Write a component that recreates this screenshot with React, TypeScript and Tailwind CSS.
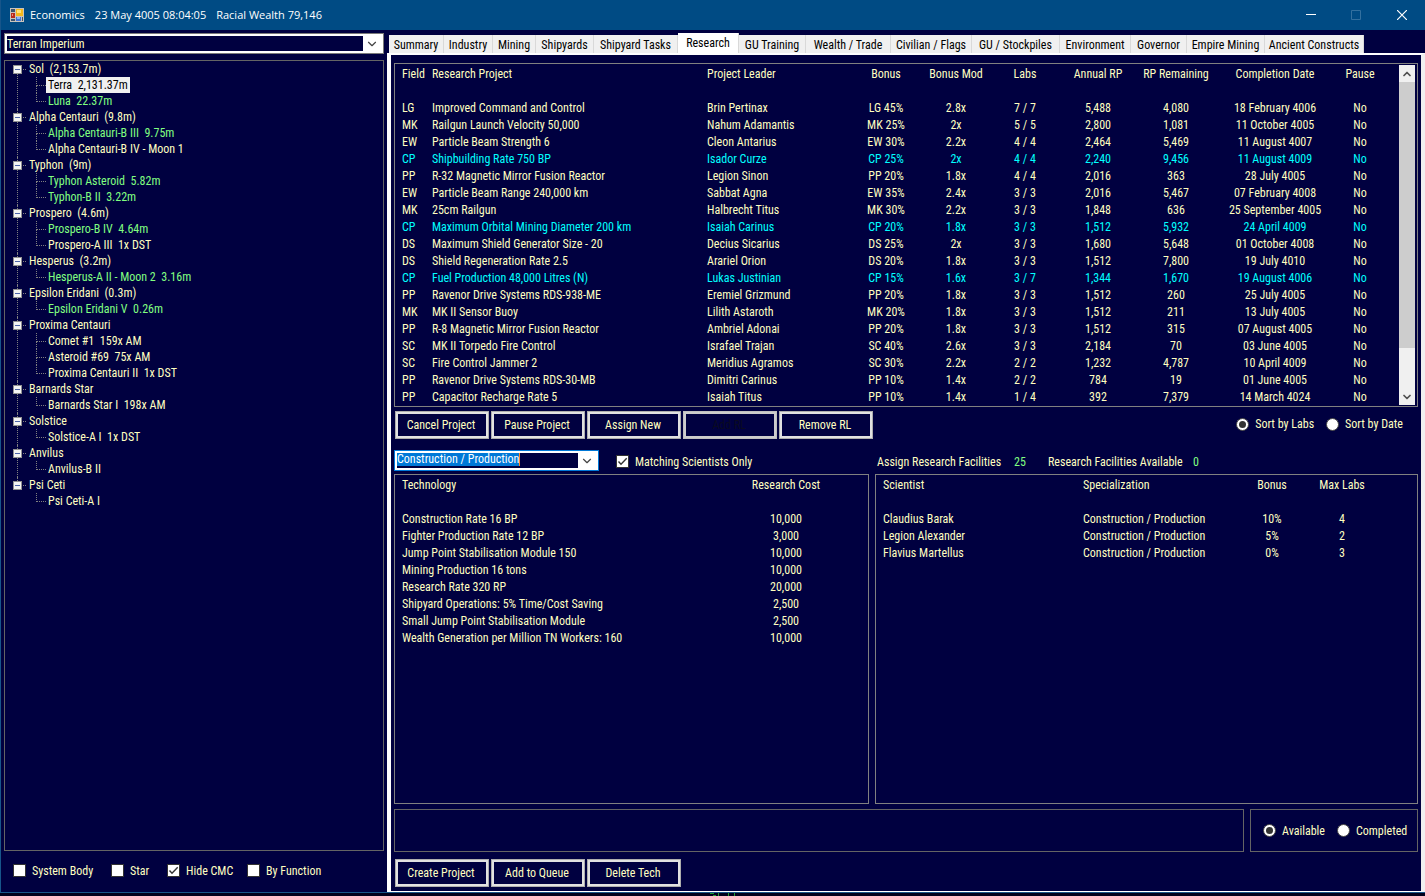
import { useState } from "react";
import type { InputHTMLAttributes, ReactNode } from "react";
import { ChevronDown, ChevronUp } from "lucide-react";
import clsx from "clsx";

type Body = { name: string; populated?: boolean };

const systems: { name: string; bodies: Body[] }[] = [
  {
    name: "Sol  (2,153.7m)",
    bodies: [
      { name: "Terra  2,131.37m", populated: true },
      { name: "Luna  22.37m", populated: true },
    ],
  },
  {
    name: "Alpha Centauri  (9.8m)",
    bodies: [
      { name: "Alpha Centauri-B III  9.75m", populated: true },
      { name: "Alpha Centauri-B IV - Moon 1" },
    ],
  },
  {
    name: "Typhon  (9m)",
    bodies: [
      { name: "Typhon Asteroid  5.82m", populated: true },
      { name: "Typhon-B II  3.22m", populated: true },
    ],
  },
  {
    name: "Prospero  (4.6m)",
    bodies: [{ name: "Prospero-B IV  4.64m", populated: true }, { name: "Prospero-A III  1x DST" }],
  },
  { name: "Hesperus  (3.2m)", bodies: [{ name: "Hesperus-A II - Moon 2  3.16m", populated: true }] },
  { name: "Epsilon Eridani  (0.3m)", bodies: [{ name: "Epsilon Eridani V  0.26m", populated: true }] },
  {
    name: "Proxima Centauri",
    bodies: [{ name: "Comet #1  159x AM" }, { name: "Asteroid #69  75x AM" }, { name: "Proxima Centauri II  1x DST" }],
  },
  { name: "Barnards Star", bodies: [{ name: "Barnards Star I  198x AM" }] },
  { name: "Solstice", bodies: [{ name: "Solstice-A I  1x DST" }] },
  { name: "Anvilus", bodies: [{ name: "Anvilus-B II" }] },
  { name: "Psi Ceti", bodies: [{ name: "Psi Ceti-A I" }] },
];

const tabs = [
  { label: "Summary", width: "w-[55px]" },
  { label: "Industry", width: "w-[49px]" },
  { label: "Mining", width: "w-[43px]" },
  { label: "Shipyards", width: "w-[58px]" },
  { label: "Shipyard Tasks", width: "w-[84px]" },
  { label: "Research", width: "w-[61px]" },
  { label: "GU Training", width: "w-[67px]" },
  { label: "Wealth / Trade", width: "w-[85px]" },
  { label: "Civilian / Flags", width: "w-[81px]" },
  { label: "GU / Stockpiles", width: "w-[88px]" },
  { label: "Environment", width: "w-[71px]" },
  { label: "Governor", width: "w-[56px]" },
  { label: "Empire Mining", width: "w-[78px]" },
  { label: "Ancient Constructs", width: "w-[99px]" },
];

const projectColumns = [
  { label: "Field", cell: "w-[37px] pl-[7px] text-left" },
  { label: "Research Project", cell: "w-[275px] text-left" },
  { label: "Project Leader", cell: "w-36 text-left" },
  { label: "Bonus", cell: "w-[70px] text-center" },
  { label: "Bonus Mod", cell: "w-[70px] text-center" },
  { label: "Labs", cell: "w-[68px] text-center" },
  { label: "Annual RP", cell: "w-[78px] text-center" },
  { label: "RP Remaining", cell: "w-[78px] text-center" },
  { label: "Completion Date", cell: "w-[120px] text-center" },
  { label: "Pause", cell: "w-[50px] text-center" },
];

const projects = [
  ["LG", "Improved Command and Control", "Brin Pertinax", "LG 45%", "2.8x", "7 / 7", "5,488", "4,080", "18 February 4006", "No"],
  ["MK", "Railgun Launch Velocity 50,000", "Nahum Adamantis", "MK 25%", "2x", "5 / 5", "2,800", "1,081", "11 October 4005", "No"],
  ["EW", "Particle Beam Strength 6", "Cleon Antarius", "EW 30%", "2.2x", "4 / 4", "2,464", "5,469", "11 August 4007", "No"],
  ["CP", "Shipbuilding Rate 750 BP", "Isador Curze", "CP 25%", "2x", "4 / 4", "2,240", "9,456", "11 August 4009", "No"],
  ["PP", "R-32 Magnetic Mirror Fusion Reactor", "Legion Sinon", "PP 20%", "1.8x", "4 / 4", "2,016", "363", "28 July 4005", "No"],
  ["EW", "Particle Beam Range 240,000 km", "Sabbat Agna", "EW 35%", "2.4x", "3 / 3", "2,016", "5,467", "07 February 4008", "No"],
  ["MK", "25cm Railgun", "Halbrecht Titus", "MK 30%", "2.2x", "3 / 3", "1,848", "636", "25 September 4005", "No"],
  ["CP", "Maximum Orbital Mining Diameter 200 km", "Isaiah Carinus", "CP 20%", "1.8x", "3 / 3", "1,512", "5,932", "24 April 4009", "No"],
  ["DS", "Maximum Shield Generator Size - 20", "Decius Sicarius", "DS 25%", "2x", "3 / 3", "1,680", "5,648", "01 October 4008", "No"],
  ["DS", "Shield Regeneration Rate 2.5", "Arariel Orion", "DS 20%", "1.8x", "3 / 3", "1,512", "7,800", "19 July 4010", "No"],
  ["CP", "Fuel Production 48,000 Litres (N)", "Lukas Justinian", "CP 15%", "1.6x", "3 / 7", "1,344", "1,670", "19 August 4006", "No"],
  ["PP", "Ravenor Drive Systems RDS-938-ME", "Eremiel Grizmund", "PP 20%", "1.8x", "3 / 3", "1,512", "260", "25 July 4005", "No"],
  ["MK", "MK II Sensor Buoy", "Lilith Astaroth", "MK 20%", "1.8x", "3 / 3", "1,512", "211", "13 July 4005", "No"],
  ["PP", "R-8 Magnetic Mirror Fusion Reactor", "Ambriel Adonai", "PP 20%", "1.8x", "3 / 3", "1,512", "315", "07 August 4005", "No"],
  ["SC", "MK II Torpedo Fire Control", "Israfael Trajan", "SC 40%", "2.6x", "3 / 3", "2,184", "70", "03 June 4005", "No"],
  ["SC", "Fire Control Jammer 2", "Meridius Agramos", "SC 30%", "2.2x", "2 / 2", "1,232", "4,787", "10 April 4009", "No"],
  ["PP", "Ravenor Drive Systems RDS-30-MB", "Dimitri Carinus", "PP 10%", "1.4x", "2 / 2", "784", "19", "01 June 4005", "No"],
  ["PP", "Capacitor Recharge Rate 5", "Isaiah Titus", "PP 10%", "1.4x", "1 / 4", "392", "7,379", "14 March 4024", "No"],
];

const technologyColumns = [
  { label: "Technology", cell: "w-[341px] pl-[7px] text-left" },
  { label: "Research Cost", cell: "w-[100px] text-center" },
];

const technologies = [
  ["Construction Rate 16 BP", "10,000"],
  ["Fighter Production Rate 12 BP", "3,000"],
  ["Jump Point Stabilisation Module 150", "10,000"],
  ["Mining Production 16 tons", "10,000"],
  ["Research Rate 320 RP", "20,000"],
  ["Shipyard Operations: 5% Time/Cost Saving", "2,500"],
  ["Small Jump Point Stabilisation Module", "2,500"],
  ["Wealth Generation per Million TN Workers: 160", "10,000"],
];

const scientistColumns = [
  { label: "Scientist", cell: "w-[207px] pl-[7px] text-left" },
  { label: "Specialization", cell: "w-[154px] text-left" },
  { label: "Bonus", cell: "w-[70px] text-center" },
  { label: "Max Labs", cell: "w-[70px] text-center" },
];

const scientists = [
  ["Claudius Barak", "Construction / Production", "10%", "4"],
  ["Legion Alexander", "Construction / Production", "5%", "2"],
  ["Flavius Martellus", "Construction / Production", "0%", "3"],
];

function DataTable({
  columns,
  rows,
  highlight,
}: {
  columns: { label: string; cell: string }[];
  rows: string[][];
  highlight?: string;
}) {
  return (
    <table className="w-full table-fixed border-collapse leading-[17px] whitespace-nowrap">
      <thead>
        <tr>
          {columns.map((c) => (
            <th key={c.label} className={clsx("p-0 pb-[17px] font-normal", c.cell)}>
              {c.label}
            </th>
          ))}
          <td />
        </tr>
      </thead>
      <tbody>
        {rows.map((row) => (
          <tr key={row[1] + row[0]} className={clsx(highlight && row[0] === highlight && "text-[#00ffff]")}>
            {row.map((value, i) => (
              <td key={columns[i].label} className={clsx("p-0", columns[i].cell)}>
                {value}
              </td>
            ))}
            <td />
          </tr>
        ))}
      </tbody>
    </table>
  );
}

function FormButton({ children, disabled }: { children: ReactNode; disabled?: boolean }) {
  return (
    <button
      disabled={disabled}
      className={clsx(
        "h-7 w-[94px] border p-0.5 leading-4",
        disabled ? "border-[#bfbfbf] bg-[#cccccc] text-[#0a0a20]" : "border-[#adadad] bg-[#e1e1e1]",
      )}
    >
      <span className="flex h-full items-center justify-center bg-[#000040] pr-0.5">{children}</span>
    </button>
  );
}

function CheckBox({ label, ...props }: { label: string } & InputHTMLAttributes<HTMLInputElement>) {
  return (
    <label className="flex items-center gap-1.5">
      <span className="grid size-[13px]">
        <input
          type="checkbox"
          className="peer col-start-1 row-start-1 size-[13px] appearance-none border border-[#333333] bg-white"
          {...props}
        />
        <svg
          viewBox="0 0 13 13"
          className="pointer-events-none col-start-1 row-start-1 hidden size-[13px] peer-checked:block"
          fill="none"
          stroke="#333333"
          strokeWidth="1.4"
        >
          <path d="M2.500 6.500 5 9.200 10.700 3.300" />
        </svg>
      </span>
      {label}
    </label>
  );
}

function Radio({ label, ...props }: { label: string } & InputHTMLAttributes<HTMLInputElement>) {
  return (
    <label className="flex items-center gap-1.5">
      <span className="grid size-[13px]">
        <input
          type="radio"
          className="peer col-start-1 row-start-1 size-[13px] appearance-none rounded-full border border-[#444444] bg-white"
          {...props}
        />
        <span className="pointer-events-none col-start-1 row-start-1 hidden size-[7px] place-self-center rounded-full bg-[#333333] peer-checked:block" />
      </span>
      {label}
    </label>
  );
}

function SystemTree() {
  const [selected, setSelected] = useState("Terra  2,131.37m");
  const [closed, setClosed] = useState<string[]>([]);

  const toggle = (name: string) =>
    setClosed(closed.includes(name) ? closed.filter((n) => n !== name) : [...closed, name]);

  return (
    <ul className="flex-1 border border-[#646464] pl-2 leading-4 whitespace-pre">
      {systems.map((system, s) => (
        <li key={system.name} className="grid grid-cols-[9px_1fr]">
          {/* Expander with the dotted trunk under it */}
          <div className="flex flex-col items-center">
            <span className={clsx("h-1 border-l border-dotted", s ? "border-[#808080]" : "border-transparent")} />
            <button
              aria-label={`Toggle ${system.name}`}
              onClick={() => toggle(system.name)}
              className="flex size-[9px] items-center justify-center border border-[#919191] bg-[#f4f4f4]"
            >
              <span className="h-px w-[5px] bg-[#4b63a7]" />
            </button>
            {s < systems.length - 1 && <span className="flex-1 border-l border-dotted border-[#808080]" />}
          </div>
          <div>
            <div className="flex items-center">
              <span className="mr-[3px] ml-px w-[3px] border-t border-dotted border-[#808080]" />
              <span>{system.name}</span>
            </div>
            {!closed.includes(system.name) && (
              <ul>
                {system.bodies.map((body, i) => (
                  <li key={body.name} className="flex pl-3.5">
                    <span className="flex w-2.5 flex-col">
                      <span className="h-[9px] border-b border-l border-dotted border-[#808080]" />
                      {i < system.bodies.length - 1 && <span className="flex-1 border-l border-dotted border-[#808080]" />}
                    </span>
                    <button
                      onClick={() => setSelected(body.name)}
                      className={clsx(
                        "px-0.5",
                        selected === body.name
                          ? "bg-[#f0f0f0] text-black"
                          : body.populated
                            ? "text-[#80ff80]"
                            : "text-[#ffffc0]",
                      )}
                    >
                      {body.name}
                    </button>
                  </li>
                ))}
              </ul>
            )}
          </div>
        </li>
      ))}
    </ul>
  );
}

function TitleBar() {
  return (
    <header className="flex h-[30px] items-center bg-[#004b84] pl-[9px] text-white">
      <svg viewBox="0 0 14 14" className="size-3.5" shapeRendering="crispEdges">
        <rect width="14" height="14" fill="#c9c3bd" />
        <rect x="1" y="1" width="4" height="3" fill="#3c5570" />
        <rect x="1" y="5" width="4" height="5" fill="#b92a1c" />
        <rect x="2" y="6" width="1" height="2" fill="#ef8d78" />
        <rect x="1" y="11" width="4" height="2" fill="#3c5570" />
        <rect x="6" y="1" width="7" height="7" fill="#f5b81c" />
        <rect x="7" y="2" width="4" height="3" fill="#ffe27a" />
        <rect x="6" y="9" width="5" height="4" fill="#3d74d6" />
        <rect x="7" y="9" width="3" height="2" fill="#8db4f2" />
        <rect x="12" y="9" width="1" height="4" fill="#3c5570" />
      </svg>
      <h1 className="flex flex-1 gap-2.5 pl-1.5 font-['Open_Sans',sans-serif] text-[11px]">
        <span>Economics</span>
        <span>23 May 4005 08:04:05</span>
        <span>Racial Wealth 79,146</span>
      </h1>
      <button aria-label="Minimize" className="flex h-full w-[45px] items-center justify-center">
        <svg viewBox="0 0 10 10" className="size-2.5" stroke="currentColor">
          <path d="M0 4.500H10" />
        </svg>
      </button>
      <button aria-label="Maximize" disabled className="flex h-full w-[46px] items-center justify-center text-[#33709f]">
        <svg viewBox="0 0 10 10" className="size-2.5" stroke="currentColor" fill="none">
          <path d="M.5 .5H9.500V9.500H.5Z" />
        </svg>
      </button>
      <button aria-label="Close" className="flex h-full w-[46px] items-center justify-center">
        <svg viewBox="0 0 10 10" className="size-2.5" stroke="currentColor" strokeWidth="1.2">
          <path d="M0 0 10 10M10 0 0 10" />
        </svg>
      </button>
    </header>
  );
}

export default function App() {
  const [activeTab, setActiveTab] = useState("Research");

  return (
    <div className="flex min-h-screen flex-col bg-[#00001c] font-['Roboto_Condensed','Roboto',sans-serif] text-xs text-[#ffffc0]">
      <div className="flex flex-1 flex-col border-b border-l border-[#17558a] bg-[#000040]">
        <TitleBar />

        <div className="flex flex-1">
          {/* Populations */}
          <aside className="flex w-[386px] flex-col px-[3px] pt-[3px]">
            <div className="flex h-[21px] items-center border border-[#7a7a7a] bg-white p-0.5">
              <select
                aria-label="Empire"
                className="h-full min-w-0 flex-1 appearance-none bg-[#000040] leading-[14px] outline-none"
              >
                <option>Terran Imperium</option>
              </select>
              <ChevronDown size={14} strokeWidth={2} className="pointer-events-none mx-0.5 text-[#444444]" />
            </div>
            <div className="mt-1.5 flex flex-1 flex-col">
              <SystemTree />
            </div>
            <div className="flex h-[41px] items-center pb-0.5 pl-[9px]">
              <div className="w-[98px]">
                <CheckBox label="System Body" />
              </div>
              <div className="w-14">
                <CheckBox label="Star" />
              </div>
              <div className="w-20">
                <CheckBox label="Hide CMC" defaultChecked />
              </div>
              <CheckBox label="By Function" />
            </div>
          </aside>

          <div className="flex min-w-0 flex-1 flex-col pt-[3px]">
            <nav role="tablist" className="flex items-end pl-0.5 text-black">
              {tabs.map((tab) => (
                <button
                  key={tab.label}
                  role="tab"
                  aria-selected={activeTab === tab.label}
                  onClick={() => setActiveTab(tab.label)}
                  className={clsx(
                    "border-r border-[#d9d9d9] text-center whitespace-nowrap",
                    tab.width,
                    activeTab === tab.label ? "h-5 bg-white pb-px" : "h-[18px] bg-[#f0f0f0] pt-0.5",
                  )}
                >
                  {tab.label}
                </button>
              ))}
            </nav>

            <main className="flex flex-1 flex-col border-t-2 border-r-4 border-b border-l-4 border-white border-r-[#f0f0f0] pt-2 pr-[3px] pb-1 pl-[3px]">
              {/* Projects in progress */}
              <section className="flex h-[344px] border border-[#808080] pr-0.5">
                <div className="min-w-0 flex-1 overflow-hidden pt-0.5">
                  <DataTable columns={projectColumns} rows={projects} highlight="CP" />
                </div>
                <div className="my-px flex w-4 flex-col bg-[#f0f0f0] text-[#505050]">
                  <button aria-label="Scroll up" className="flex h-[17px] items-center justify-center">
                    <ChevronUp size={12} strokeWidth={3.5} />
                  </button>
                  <div className="flex-1">
                    <div className="h-[87%] bg-[#cdcdcd]" />
                  </div>
                  <button aria-label="Scroll down" className="flex h-[17px] items-center justify-center">
                    <ChevronDown size={12} strokeWidth={3.5} />
                  </button>
                </div>
              </section>

              <div className="flex items-center justify-between pt-1 pr-[15px] pl-px">
                <div className="flex gap-0.5">
                  <FormButton>Cancel Project</FormButton>
                  <FormButton>Pause Project</FormButton>
                  <FormButton>Assign New</FormButton>
                  <FormButton disabled>Add RL</FormButton>
                  <FormButton>Remove RL</FormButton>
                </div>
                <div className="flex gap-3 pb-0.5">
                  <Radio name="sort" label="Sort by Labs" defaultChecked />
                  <Radio name="sort" label="Sort by Date" />
                </div>
              </div>

              <div className="flex items-start pt-[11px] pb-px">
                <div className="flex h-[21px] w-[205px] border border-[#0078d7] bg-white p-0.5">
                  <div className="flex flex-1 items-start bg-[#000040]">
                    <select
                      aria-label="Research category"
                      className="field-sizing-content h-[13px] appearance-none border-r border-[#ff8728] bg-[#0078d7] leading-[13px] text-white outline-none"
                    >
                      <option>Construction / Production</option>
                    </select>
                  </div>
                  <ChevronDown size={14} strokeWidth={2} className="pointer-events-none mx-0.5 self-center text-[#444444]" />
                </div>
                <div className="flex h-[23px] flex-1 items-center pl-[17px]">
                  <div className="w-[261px]">
                    <CheckBox label="Matching Scientists Only" defaultChecked />
                  </div>
                  <span className="w-[137px]">Assign Research Facilities</span>
                  <span className="w-[34px] text-[#80ff80]">25</span>
                  <span className="w-[145px]">Research Facilities Available</span>
                  <span className="text-[#80ff80]">0</span>
                </div>
              </div>

              <div className="flex flex-1 gap-1.5">
                <section className="w-[475px] border border-[#808080] pt-0.5">
                  <DataTable columns={technologyColumns} rows={technologies} />
                </section>
                <section className="min-w-0 flex-1 border border-[#808080] pt-0.5">
                  <DataTable columns={scientistColumns} rows={scientists} />
                </section>
              </div>

              <div className="flex h-12 gap-1.5 pt-[5px]">
                <div className="flex-1 border border-[#646464]" />
                <div className="flex w-[168px] items-center gap-3 border border-[#646464] pl-3">
                  <Radio name="state" label="Available" defaultChecked />
                  <Radio name="state" label="Completed" />
                </div>
              </div>

              <div className="flex gap-0.5 pt-[7px] pl-px">
                <FormButton>Create Project</FormButton>
                <FormButton>Add to Queue</FormButton>
                <FormButton>Delete Tech</FormButton>
              </div>
            </main>
          </div>
        </div>
      </div>

      {/* Sliver of the desktop below the window */}
      <div className="flex h-[3px] justify-center pl-5">
        <svg viewBox="0 0 28 3" className="h-[3px] w-7" stroke="#1f9a2e" fill="none">
          <path d="M1 .5H5M4 2.500H7M9.500 0V3M19.500 0V3M25.500 0V3" />
        </svg>
      </div>
    </div>
  );
}
